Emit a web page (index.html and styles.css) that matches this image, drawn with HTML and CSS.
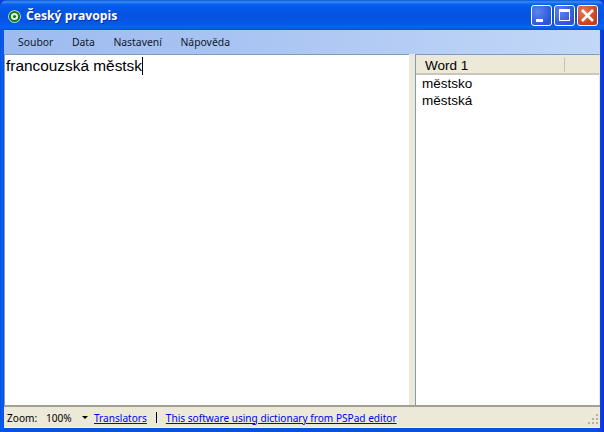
FILE: index.html
```html
<!DOCTYPE html>
<html lang="cs">
<head>
<meta charset="utf-8">
<title>Český pravopis</title>
<link rel="stylesheet" href="styles.css">
</head>
<body>
<div class="window">
  <header class="titlebar">
    <svg class="appicon" width="13" height="13" viewBox="0 0 13 13"><circle cx="6.5" cy="6.5" r="6.3" fill="#e8f0e8"/><circle cx="6.5" cy="6.5" r="4.6" fill="#e8f0e8" stroke="#0b7d1a" stroke-width="2"/><circle cx="6.5" cy="6.5" r="1.6" fill="#0b7d1a"/></svg>
    <span class="title">Český pravopis</span>
    <div class="controls">
      <div class="btn btn-blue"><svg width="21" height="21" viewBox="0 0 21 21"><rect x="5" y="14" width="7" height="3" fill="#fff"/></svg></div>
      <div class="btn btn-blue"><svg width="21" height="21" viewBox="0 0 21 21"><rect x="5.5" y="4.5" width="10" height="11" fill="none" stroke="#fff" stroke-width="1"/><rect x="5" y="4" width="11" height="3" fill="#fff"/></svg></div>
      <div class="btn btn-red"><svg width="21" height="21" viewBox="0 0 21 21"><path d="M5 5L16 16M16 5L5 16" stroke="#fff" stroke-width="2.6" fill="none"/></svg></div>
    </div>
  </header>
  <div class="inner">
    <nav class="menubar">
      <span class="menu">Soubor</span>
      <span class="menu">Data</span>
      <span class="menu">Nastavení</span>
      <span class="menu">Nápověda</span>
    </nav>
    <main class="panes">
      <section class="editor"><span class="edit-text">francouzská městsk</span><span class="caret"></span></section>
      <div class="splitter"></div>
      <section class="list">
        <div class="list-head"><span class="col">Word 1</span></div>
        <div class="row">městsko</div>
        <div class="row">městská</div>
      </section>
    </main>
    <footer class="status">
      <span class="zoom-label">Zoom:</span>
      <span class="zoom-val">100%</span>
      <span class="arrow"></span>
      <a class="link first">Translators</a>
      <span class="sep"></span>
      <a class="link">This software using dictionary from PSPad editor</a>
      <svg class="grip" width="12" height="12" viewBox="0 0 12 12"><g fill="#b5b2a2"><rect x="8" y="0" width="2" height="2"/><rect x="4" y="4" width="2" height="2"/><rect x="8" y="4" width="2" height="2"/><rect x="0" y="8" width="2" height="2"/><rect x="4" y="8" width="2" height="2"/><rect x="8" y="8" width="2" height="2"/></g></svg>
    </footer>
  </div>
</div>
</body>
</html>
```

FILE: styles.css
```css
* { box-sizing: border-box; }
html, body { margin: 0; padding: 0; }
body { width: 604px; height: 432px; overflow: hidden; background: #0a3ad0; font-family: "Liberation Sans", Arial, sans-serif; }
.window { width: 604px; height: 432px; display: flex; flex-direction: column; border-radius: 7px 7px 0 0; overflow: hidden; background: linear-gradient(90deg, #0050ee 0, #0a5fe8 2px, #0a4fe0 4px, #0a4fe0 99%, #0831d9 100%); }
.titlebar { flex: 0 0 30px; height: 30px; display: flex; align-items: center; padding: 2px 6px 0 8px; background: linear-gradient(180deg, #0a58d8 0, #3a8cf4 2px, #0a62ee 4px, #0558e8 8px, #0553e0 16px, #0558e8 24px, #0664f0 27px, #0650d8 30px); }
.appicon { flex: none; margin-right: 5px; }
.title { color: #fff; font: bold 12.2px/16px "Open Sans", "Liberation Sans", sans-serif; text-shadow: 1px 1px 0 #0a2fa0; flex: 1; }
.controls { display: flex; gap: 2px; margin-top: -2px; }
.btn { width: 21px; height: 21px; border: 1px solid #fff; border-radius: 3px; }
.btn svg { display: block; margin: -1px; }
.btn-blue { background: radial-gradient(circle at 30% 30%, #5b86ec, #2a55d8 75%); }
.btn-red { background: radial-gradient(circle at 30% 30%, #e8785c, #c83c18 75%); }
.inner { flex: 1; display: flex; flex-direction: column; margin: 0 4px 4px; min-height: 0; background: #ece9d8; }
.menubar { flex: 0 0 24px; display: flex; align-items: center; padding: 0 0 1px 14px; background: linear-gradient(90deg, #9ebbf0 0, #a9c4f2 40%, #c3d8f8 100%); font: 10.4px/14px "Noto Sans", sans-serif; color: #10182c; }
.menu { margin-right: 18.5px; }
.panes { flex: 1; display: flex; min-height: 0; border-bottom: 2px solid #a4a194; }
.editor { flex: 0 0 405px; background: #fff; border-top: 1px solid #7f9db9; border-left: 1px solid #7f9db9; padding: 2px 0 0 1px; font: 15.4px/18px "Liberation Sans", sans-serif; color: #000; display: flex; align-items: flex-start; }
.caret { width: 1px; height: 18px; background: #000; }
.splitter { flex: 0 0 6px; background: #ece9d8; }
.list { flex: 1; background: #fff; border-top: 1px solid #7f9db9; border-left: 1px solid #7f9db9; border-right: 1px solid #ece9d8; display: flex; flex-direction: column; }
.list-head { height: 20px; flex: none; background: #ece9d8; border-bottom: 2px solid #cbc7b8; padding: 3px 0 0 9px; font: 13.5px/15px "Liberation Sans", sans-serif; color: #000; display: flex; }
.col { width: 140px; height: 14px; border-right: 1px solid #c5c2b2; }
.row { height: 17px; padding-left: 6px; font: 13.5px/17px "Liberation Sans", sans-serif; color: #000; }
.status { flex: 0 0 21px; display: flex; align-items: center; padding: 1px 0 0 3px; font: 10.1px/14px "Noto Sans", sans-serif; color: #000; background: #ece9d8; position: relative; border-bottom: 1px solid #f6f4ea; }
.zoom-label { width: 39px; }
.zoom-val { width: 36px; }
.arrow { width: 0; height: 0; border: 3px solid transparent; border-top-color: #000; border-bottom: 0; }
.link { color: #0000ee; text-decoration: underline; }
.link.first { margin-left: 6px; }
.sep { width: 1px; height: 11px; background: #000; margin: 0 9px; }
.grip { position: absolute; right: 0; bottom: 1px; }
```
